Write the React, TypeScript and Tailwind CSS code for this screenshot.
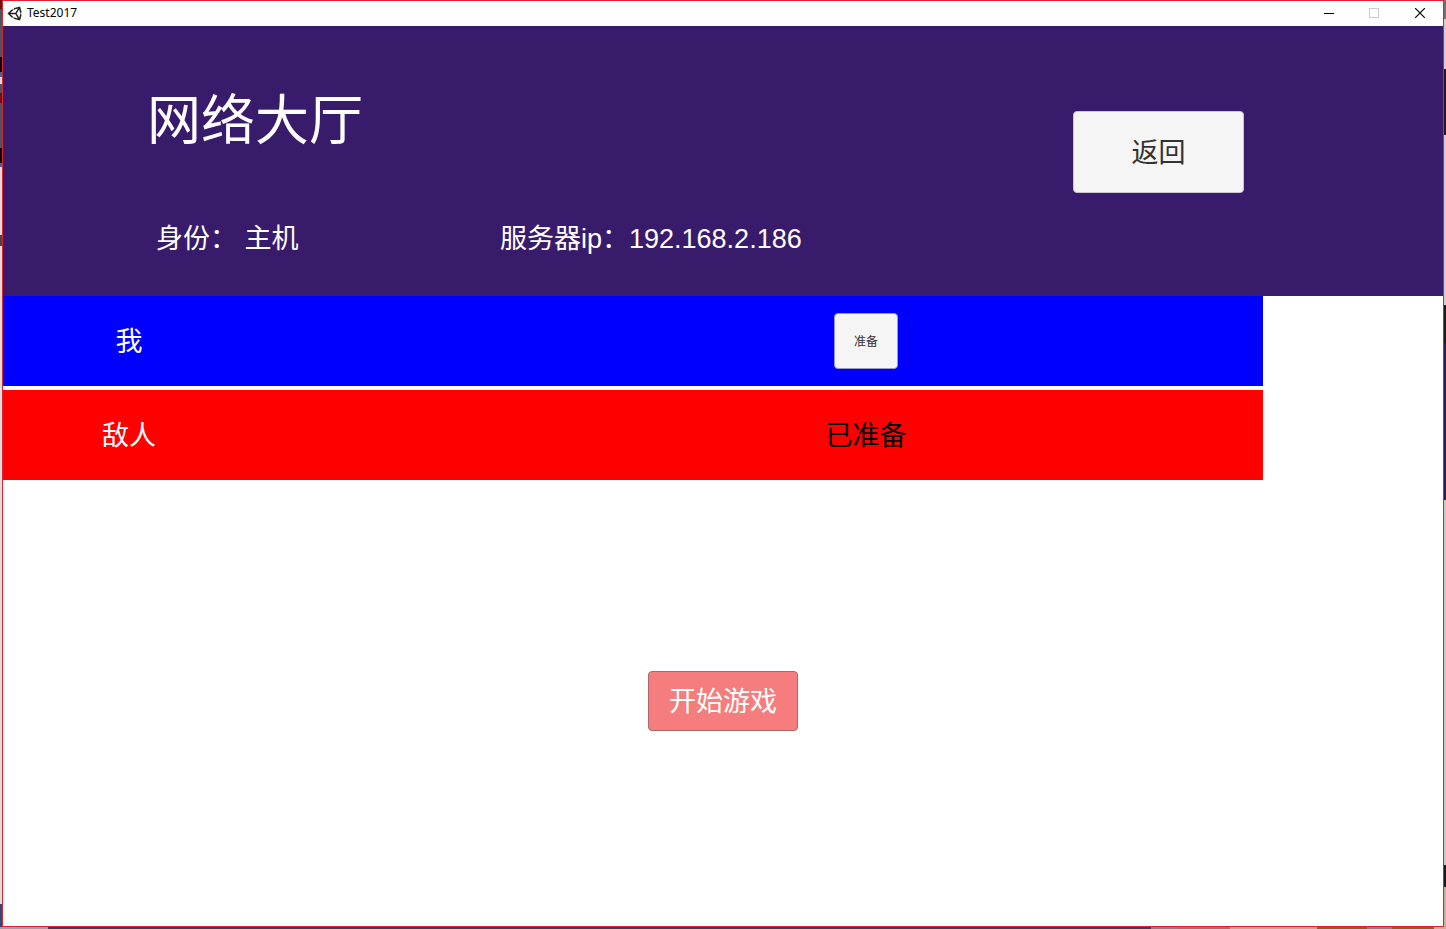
type Player = { name: string; ready: boolean; self: boolean };

const players: Player[] = [
  { name: "我", ready: false, self: true },
  { name: "敌人", ready: true, self: false },
];

function UnityLogo() {
  return (
    <svg className="size-[15px] text-[#222222]" viewBox="0 0 512 512" fill="currentColor" aria-hidden="true">
      <path d="M498.11 206.4L445.31 14.72 248.2 66.08 219 116.14l-59.2-.43L15.54 256.01l144.26 140.29 59.17-.43 29.22 50.02 197.12 51.36 52.8-191.62-30-49.63 30-49.6zM223.77 124.2L374.55 86.51 288 232.33H114.87l108.9-108.13zm0 263.63l-108.9-108.13H288l86.55 145.81-150.78-37.68zm193 14L330.17 256l86.6-145.84L458.56 256l-41.79 145.83z" />
    </svg>
  );
}

function TitleBar() {
  return (
    <div className="flex h-[25px] items-center justify-between bg-white text-black">
      <div className="flex h-6 items-center gap-[5px] self-start pl-1">
        <UnityLogo />
        <span className="font-['Noto_Sans','Noto_Sans_CJK_SC',sans-serif] text-xs leading-4">Test2017</span>
      </div>
      <div className="flex h-6 self-start">
        <button type="button" aria-label="最小化" className="flex w-[46px] items-center justify-center">
          <svg className="size-[10px]" viewBox="0 0 10 10" shapeRendering="crispEdges">
            <path d="M0 5.5H10" stroke="currentColor" />
          </svg>
        </button>
        <button type="button" aria-label="最大化" disabled className="flex w-[44px] items-center justify-center text-[#cccccc]">
          <svg className="size-[10px]" viewBox="0 0 10 10" shapeRendering="crispEdges">
            <rect x=".5" y=".5" width="9" height="9" fill="none" stroke="currentColor" />
          </svg>
        </button>
        <button type="button" aria-label="关闭" className="flex w-[47px] items-center justify-center">
          <svg className="size-[10px]" viewBox="0 0 10 10">
            <path d="M0 0L10 10M10 0L0 10" stroke="currentColor" strokeWidth="1.2" />
          </svg>
        </button>
      </div>
    </div>
  );
}

function LobbyHeader() {
  return (
    <header className="flex h-[270px] items-start justify-between bg-[#391b6b] text-white">
      <div className="pt-[65px] pl-[144px]">
        <h1 className="text-[54px] leading-[60px]">网络大厅</h1>
        <div className="mt-[68px] flex text-[27px] leading-[40px] whitespace-nowrap">
          <p className="w-[353px] pl-[9px]">身份： 主机</p>
          <p>服务器ip：192.168.2.186</p>
        </div>
      </div>
      <button
        type="button"
        className="mt-[85px] mr-[199px] h-[82px] w-[171px] rounded-[4px] border border-[#c9c5d2] bg-[#f5f5f5] pt-[2px] text-[27px] leading-[40px] text-[#323232]"
      >
        返回
      </button>
    </header>
  );
}

function PlayerRow({ player }: { player: Player }) {
  return (
    <li
      className={`grid h-[90px] grid-cols-[20%_43.5%_10%_1fr] items-center text-[27px] leading-[40px] ${
        player.self ? "bg-[#0000ff]" : "bg-[#ff0000]"
      }`}
    >
      <span className="pt-[2px] text-center text-white">{player.name}</span>
      <div className="col-start-3 flex justify-center whitespace-nowrap">
        {player.ready ? (
          <span className="pt-[2px] text-black">已准备</span>
        ) : (
          <button
            type="button"
            className="h-[56px] w-[64px] rounded-[4px] border border-[#9a9ac8] bg-[#f5f5f5] pt-[2px] text-xs text-[#323232]"
          >
            准备
          </button>
        )}
      </div>
    </li>
  );
}

export default function App() {
  return (
    <div className="flex min-h-screen flex-col bg-[#cfcfcb] font-['Liberation_Sans','Noto_Sans_CJK_SC',sans-serif] font-normal">
      <div className="flex flex-1">
        <div className="w-[2px] bg-[linear-gradient(#6b1015_0_9px,#3c5a68_9px_57px,#080808_57px_72px,#3a68a0_72px_77px,#dddddd_77px_84px,#3c5a68_84px_93px,#6b1015_93px_103px,#3c5a68_103px_148px,#080808_148px_163px,#3a68a0_163px_167px,#dedede_167px_235px,#444444_235px_246px,#dedede_246px_904px,#2a4a78_904px)]" />
        <div className="flex flex-1 flex-col border border-[#e3202e] bg-white">
          <TitleBar />
          <main className="flex flex-1 flex-col">
            <LobbyHeader />
            <ul className="flex w-[87.5%] flex-col gap-1">
              {players.map((player) => (
                <PlayerRow key={player.name} player={player} />
              ))}
            </ul>
            <button
              type="button"
              className="mt-[191px] h-[60px] w-[150px] self-center rounded-[4px] border border-[#b06568] bg-[#f57d7d] pt-[2px] text-[27px] leading-[40px] text-white"
            >
              开始游戏
            </button>
          </main>
        </div>
        <div className="w-[2px] bg-[linear-gradient(#77706e_0_19px,#d3cdd6_19px_69px,#1e1c22_69px_135px,#d3cdd6_135px_305px,#191c1b_305px_343px,#2c1a5c_343px_500px,#c9cac5_500px_865px,#171a1c_865px_887px,#cbb193_887px)]" />
      </div>
      <div className="h-[2px] bg-[linear-gradient(90deg,#88a8b8_0_48px,#24456e_48px_1151px,#85808c_1151px_1178px,#b0686a_1178px_1230px,#c4a78d_1230px_1317px,#86641a_1317px_1367px,#85808c_1367px_1392px,#86641a_1392px_1434px,#cbb193_1434px)]" />
    </div>
  );
}
